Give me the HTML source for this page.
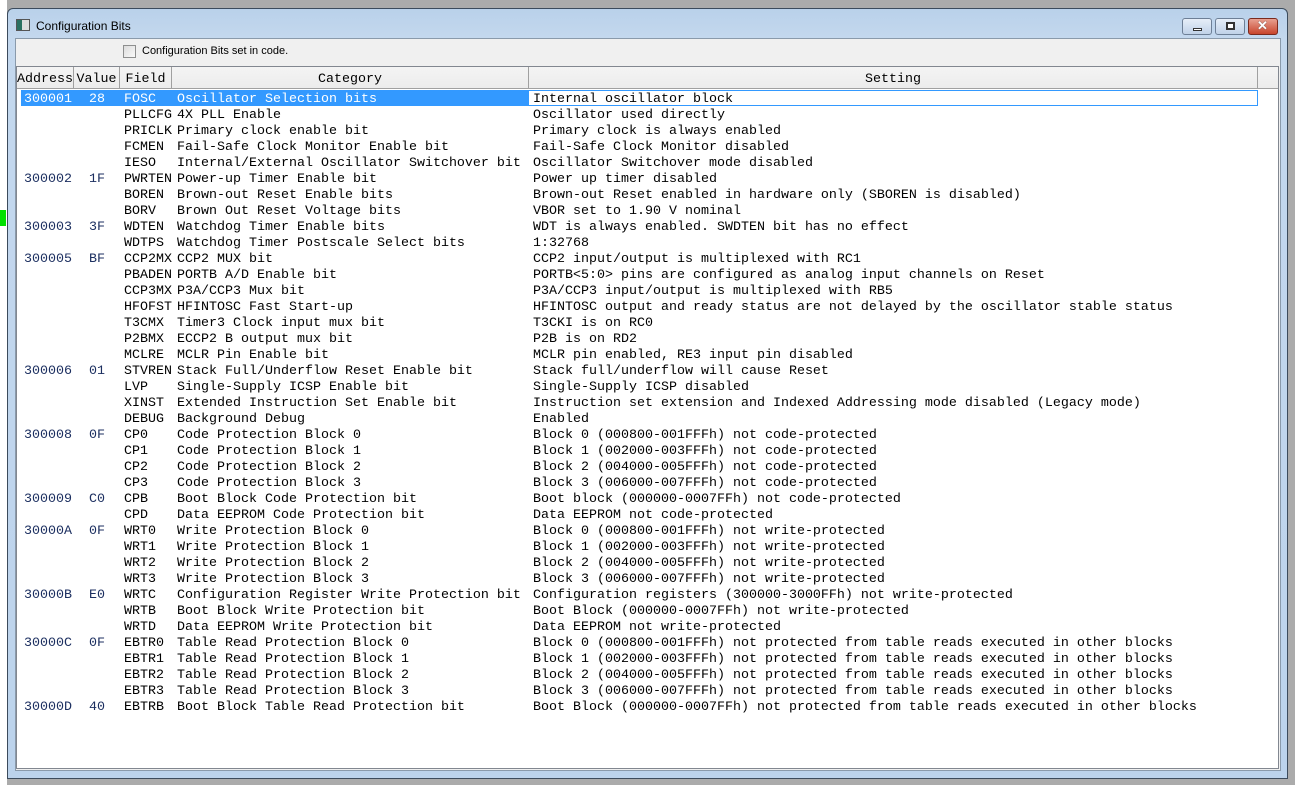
<!DOCTYPE html>
<html><head><meta charset="utf-8"><style>
*{margin:0;padding:0;box-sizing:border-box}
body{width:1295px;height:785px;background:#ababab;position:relative;overflow:hidden;font-family:"Liberation Sans",sans-serif}
.a{position:absolute}
.win{left:7px;top:8px;width:1281px;height:771px;background:linear-gradient(#b9d1ea,#c4d8ee 30px,#bcd3ec);border:1px solid #3c4b5c;border-radius:6px 6px 0 0}
.client{left:15px;top:38px;width:1266px;height:733px;background:#f0f0f0;border:1px solid #8a9aab}
.tbl{left:16px;top:66px;width:1263px;height:703px;background:#fff;border:1px solid #828790}
.hd{top:67px;height:22px;background:linear-gradient(#f4f4f4,#ececec);border-right:1px solid #a0a0a0;border-bottom:1px solid #a0a0a0;font:13.33px "Liberation Mono",monospace;line-height:21px;padding-top:2px;color:#000;text-align:center}
.r{position:absolute;height:16px;font:13.33px "Liberation Mono",monospace;line-height:16px;white-space:pre;color:#000;transform:translateY(2px)}
.ad{color:#1c2f60}
.btn{top:18px;height:17px;border:1px solid #6d7f96;border-radius:3px;background:linear-gradient(#e6eef8,#c0d2e8)}
</style></head><body>
<div class="a" style="left:0;top:0;width:7px;height:785px;background:#fff"></div>
<div class="a" style="left:0;top:210px;width:6px;height:16px;background:#00e000"></div>
<div class="a win"></div>
<div class="a" style="left:16px;top:19px;width:14px;height:12px;border:1px solid #555;background:linear-gradient(90deg,#2a7060 40%,#ddd 40%)"></div>
<div class="a" style="left:36px;top:19px;font-size:12px;color:#000">Configuration Bits</div>
<div class="a btn" style="left:1182px;width:30px"><div class="a" style="left:10px;top:9px;width:9px;height:3px;background:#fff;border:1px solid #333"></div></div>
<div class="a btn" style="left:1215px;width:30px"><div class="a" style="left:10px;top:3px;width:9px;height:8px;border:2px solid #333;background:#fff"></div></div>
<div class="a btn" style="left:1248px;width:30px;background:linear-gradient(#e8a090,#c8452c);border-color:#7a2a1e"><div class="a" style="left:8px;top:-1px;color:#fff;font:bold 13px 'Liberation Sans';text-shadow:0 0 1px #333">✕</div></div>
<div class="a client"></div>
<div class="a" style="left:123px;top:45px;width:13px;height:13px;border:1px solid #8e8f8f;background:linear-gradient(135deg,#dcdcdc,#fafafa)"></div>
<div class="a" style="left:142px;top:45px;font-size:11px;color:#000">Configuration Bits set in code.</div>
<div class="a tbl"></div>
<div class="a hd" style="left:17px;width:57px">Address</div>
<div class="a hd" style="left:74px;width:46px">Value</div>
<div class="a hd" style="left:120px;width:52px">Field</div>
<div class="a hd" style="left:172px;width:357px">Category</div>
<div class="a hd" style="left:529px;width:729px">Setting</div>
<div class="a hd" style="left:1258px;width:20px;border-right:none"></div>
<div class="a" style="left:21px;top:90px;width:507px;height:16px;background:#3399ff"></div>
<div class="a" style="left:528px;top:90px;width:730px;height:16px;border:1px solid #3399ff"></div>
<div class="r ad" style="left:24px;top:90px;color:#fff">300001</div><div class="r" style="left:89px;top:90px;color:#fff">28</div><div class="r" style="left:124px;top:90px;color:#fff">FOSC</div><div class="r" style="left:177px;top:90px;color:#fff">Oscillator Selection bits</div><div class="r" style="left:533px;top:90px">Internal oscillator block</div>
<div class="r" style="left:124px;top:106px">PLLCFG</div><div class="r" style="left:177px;top:106px">4X PLL Enable</div><div class="r" style="left:533px;top:106px">Oscillator used directly</div>
<div class="r" style="left:124px;top:122px">PRICLK</div><div class="r" style="left:177px;top:122px">Primary clock enable bit</div><div class="r" style="left:533px;top:122px">Primary clock is always enabled</div>
<div class="r" style="left:124px;top:138px">FCMEN</div><div class="r" style="left:177px;top:138px">Fail-Safe Clock Monitor Enable bit</div><div class="r" style="left:533px;top:138px">Fail-Safe Clock Monitor disabled</div>
<div class="r" style="left:124px;top:154px">IESO</div><div class="r" style="left:177px;top:154px">Internal/External Oscillator Switchover bit</div><div class="r" style="left:533px;top:154px">Oscillator Switchover mode disabled</div>
<div class="r ad" style="left:24px;top:170px">300002</div><div class="r ad" style="left:89px;top:170px">1F</div><div class="r" style="left:124px;top:170px">PWRTEN</div><div class="r" style="left:177px;top:170px">Power-up Timer Enable bit</div><div class="r" style="left:533px;top:170px">Power up timer disabled</div>
<div class="r" style="left:124px;top:186px">BOREN</div><div class="r" style="left:177px;top:186px">Brown-out Reset Enable bits</div><div class="r" style="left:533px;top:186px">Brown-out Reset enabled in hardware only (SBOREN is disabled)</div>
<div class="r" style="left:124px;top:202px">BORV</div><div class="r" style="left:177px;top:202px">Brown Out Reset Voltage bits</div><div class="r" style="left:533px;top:202px">VBOR set to 1.90 V nominal</div>
<div class="r ad" style="left:24px;top:218px">300003</div><div class="r ad" style="left:89px;top:218px">3F</div><div class="r" style="left:124px;top:218px">WDTEN</div><div class="r" style="left:177px;top:218px">Watchdog Timer Enable bits</div><div class="r" style="left:533px;top:218px">WDT is always enabled. SWDTEN bit has no effect</div>
<div class="r" style="left:124px;top:234px">WDTPS</div><div class="r" style="left:177px;top:234px">Watchdog Timer Postscale Select bits</div><div class="r" style="left:533px;top:234px">1:32768</div>
<div class="r ad" style="left:24px;top:250px">300005</div><div class="r ad" style="left:89px;top:250px">BF</div><div class="r" style="left:124px;top:250px">CCP2MX</div><div class="r" style="left:177px;top:250px">CCP2 MUX bit</div><div class="r" style="left:533px;top:250px">CCP2 input/output is multiplexed with RC1</div>
<div class="r" style="left:124px;top:266px">PBADEN</div><div class="r" style="left:177px;top:266px">PORTB A/D Enable bit</div><div class="r" style="left:533px;top:266px">PORTB&lt;5:0&gt; pins are configured as analog input channels on Reset</div>
<div class="r" style="left:124px;top:282px">CCP3MX</div><div class="r" style="left:177px;top:282px">P3A/CCP3 Mux bit</div><div class="r" style="left:533px;top:282px">P3A/CCP3 input/output is multiplexed with RB5</div>
<div class="r" style="left:124px;top:298px">HFOFST</div><div class="r" style="left:177px;top:298px">HFINTOSC Fast Start-up</div><div class="r" style="left:533px;top:298px">HFINTOSC output and ready status are not delayed by the oscillator stable status</div>
<div class="r" style="left:124px;top:314px">T3CMX</div><div class="r" style="left:177px;top:314px">Timer3 Clock input mux bit</div><div class="r" style="left:533px;top:314px">T3CKI is on RC0</div>
<div class="r" style="left:124px;top:330px">P2BMX</div><div class="r" style="left:177px;top:330px">ECCP2 B output mux bit</div><div class="r" style="left:533px;top:330px">P2B is on RD2</div>
<div class="r" style="left:124px;top:346px">MCLRE</div><div class="r" style="left:177px;top:346px">MCLR Pin Enable bit</div><div class="r" style="left:533px;top:346px">MCLR pin enabled, RE3 input pin disabled</div>
<div class="r ad" style="left:24px;top:362px">300006</div><div class="r ad" style="left:89px;top:362px">01</div><div class="r" style="left:124px;top:362px">STVREN</div><div class="r" style="left:177px;top:362px">Stack Full/Underflow Reset Enable bit</div><div class="r" style="left:533px;top:362px">Stack full/underflow will cause Reset</div>
<div class="r" style="left:124px;top:378px">LVP</div><div class="r" style="left:177px;top:378px">Single-Supply ICSP Enable bit</div><div class="r" style="left:533px;top:378px">Single-Supply ICSP disabled</div>
<div class="r" style="left:124px;top:394px">XINST</div><div class="r" style="left:177px;top:394px">Extended Instruction Set Enable bit</div><div class="r" style="left:533px;top:394px">Instruction set extension and Indexed Addressing mode disabled (Legacy mode)</div>
<div class="r" style="left:124px;top:410px">DEBUG</div><div class="r" style="left:177px;top:410px">Background Debug</div><div class="r" style="left:533px;top:410px">Enabled</div>
<div class="r ad" style="left:24px;top:426px">300008</div><div class="r ad" style="left:89px;top:426px">0F</div><div class="r" style="left:124px;top:426px">CP0</div><div class="r" style="left:177px;top:426px">Code Protection Block 0</div><div class="r" style="left:533px;top:426px">Block 0 (000800-001FFFh) not code-protected</div>
<div class="r" style="left:124px;top:442px">CP1</div><div class="r" style="left:177px;top:442px">Code Protection Block 1</div><div class="r" style="left:533px;top:442px">Block 1 (002000-003FFFh) not code-protected</div>
<div class="r" style="left:124px;top:458px">CP2</div><div class="r" style="left:177px;top:458px">Code Protection Block 2</div><div class="r" style="left:533px;top:458px">Block 2 (004000-005FFFh) not code-protected</div>
<div class="r" style="left:124px;top:474px">CP3</div><div class="r" style="left:177px;top:474px">Code Protection Block 3</div><div class="r" style="left:533px;top:474px">Block 3 (006000-007FFFh) not code-protected</div>
<div class="r ad" style="left:24px;top:490px">300009</div><div class="r ad" style="left:89px;top:490px">C0</div><div class="r" style="left:124px;top:490px">CPB</div><div class="r" style="left:177px;top:490px">Boot Block Code Protection bit</div><div class="r" style="left:533px;top:490px">Boot block (000000-0007FFh) not code-protected</div>
<div class="r" style="left:124px;top:506px">CPD</div><div class="r" style="left:177px;top:506px">Data EEPROM Code Protection bit</div><div class="r" style="left:533px;top:506px">Data EEPROM not code-protected</div>
<div class="r ad" style="left:24px;top:522px">30000A</div><div class="r ad" style="left:89px;top:522px">0F</div><div class="r" style="left:124px;top:522px">WRT0</div><div class="r" style="left:177px;top:522px">Write Protection Block 0</div><div class="r" style="left:533px;top:522px">Block 0 (000800-001FFFh) not write-protected</div>
<div class="r" style="left:124px;top:538px">WRT1</div><div class="r" style="left:177px;top:538px">Write Protection Block 1</div><div class="r" style="left:533px;top:538px">Block 1 (002000-003FFFh) not write-protected</div>
<div class="r" style="left:124px;top:554px">WRT2</div><div class="r" style="left:177px;top:554px">Write Protection Block 2</div><div class="r" style="left:533px;top:554px">Block 2 (004000-005FFFh) not write-protected</div>
<div class="r" style="left:124px;top:570px">WRT3</div><div class="r" style="left:177px;top:570px">Write Protection Block 3</div><div class="r" style="left:533px;top:570px">Block 3 (006000-007FFFh) not write-protected</div>
<div class="r ad" style="left:24px;top:586px">30000B</div><div class="r ad" style="left:89px;top:586px">E0</div><div class="r" style="left:124px;top:586px">WRTC</div><div class="r" style="left:177px;top:586px">Configuration Register Write Protection bit</div><div class="r" style="left:533px;top:586px">Configuration registers (300000-3000FFh) not write-protected</div>
<div class="r" style="left:124px;top:602px">WRTB</div><div class="r" style="left:177px;top:602px">Boot Block Write Protection bit</div><div class="r" style="left:533px;top:602px">Boot Block (000000-0007FFh) not write-protected</div>
<div class="r" style="left:124px;top:618px">WRTD</div><div class="r" style="left:177px;top:618px">Data EEPROM Write Protection bit</div><div class="r" style="left:533px;top:618px">Data EEPROM not write-protected</div>
<div class="r ad" style="left:24px;top:634px">30000C</div><div class="r ad" style="left:89px;top:634px">0F</div><div class="r" style="left:124px;top:634px">EBTR0</div><div class="r" style="left:177px;top:634px">Table Read Protection Block 0</div><div class="r" style="left:533px;top:634px">Block 0 (000800-001FFFh) not protected from table reads executed in other blocks</div>
<div class="r" style="left:124px;top:650px">EBTR1</div><div class="r" style="left:177px;top:650px">Table Read Protection Block 1</div><div class="r" style="left:533px;top:650px">Block 1 (002000-003FFFh) not protected from table reads executed in other blocks</div>
<div class="r" style="left:124px;top:666px">EBTR2</div><div class="r" style="left:177px;top:666px">Table Read Protection Block 2</div><div class="r" style="left:533px;top:666px">Block 2 (004000-005FFFh) not protected from table reads executed in other blocks</div>
<div class="r" style="left:124px;top:682px">EBTR3</div><div class="r" style="left:177px;top:682px">Table Read Protection Block 3</div><div class="r" style="left:533px;top:682px">Block 3 (006000-007FFFh) not protected from table reads executed in other blocks</div>
<div class="r ad" style="left:24px;top:698px">30000D</div><div class="r ad" style="left:89px;top:698px">40</div><div class="r" style="left:124px;top:698px">EBTRB</div><div class="r" style="left:177px;top:698px">Boot Block Table Read Protection bit</div><div class="r" style="left:533px;top:698px">Boot Block (000000-0007FFh) not protected from table reads executed in other blocks</div>
</body></html>
